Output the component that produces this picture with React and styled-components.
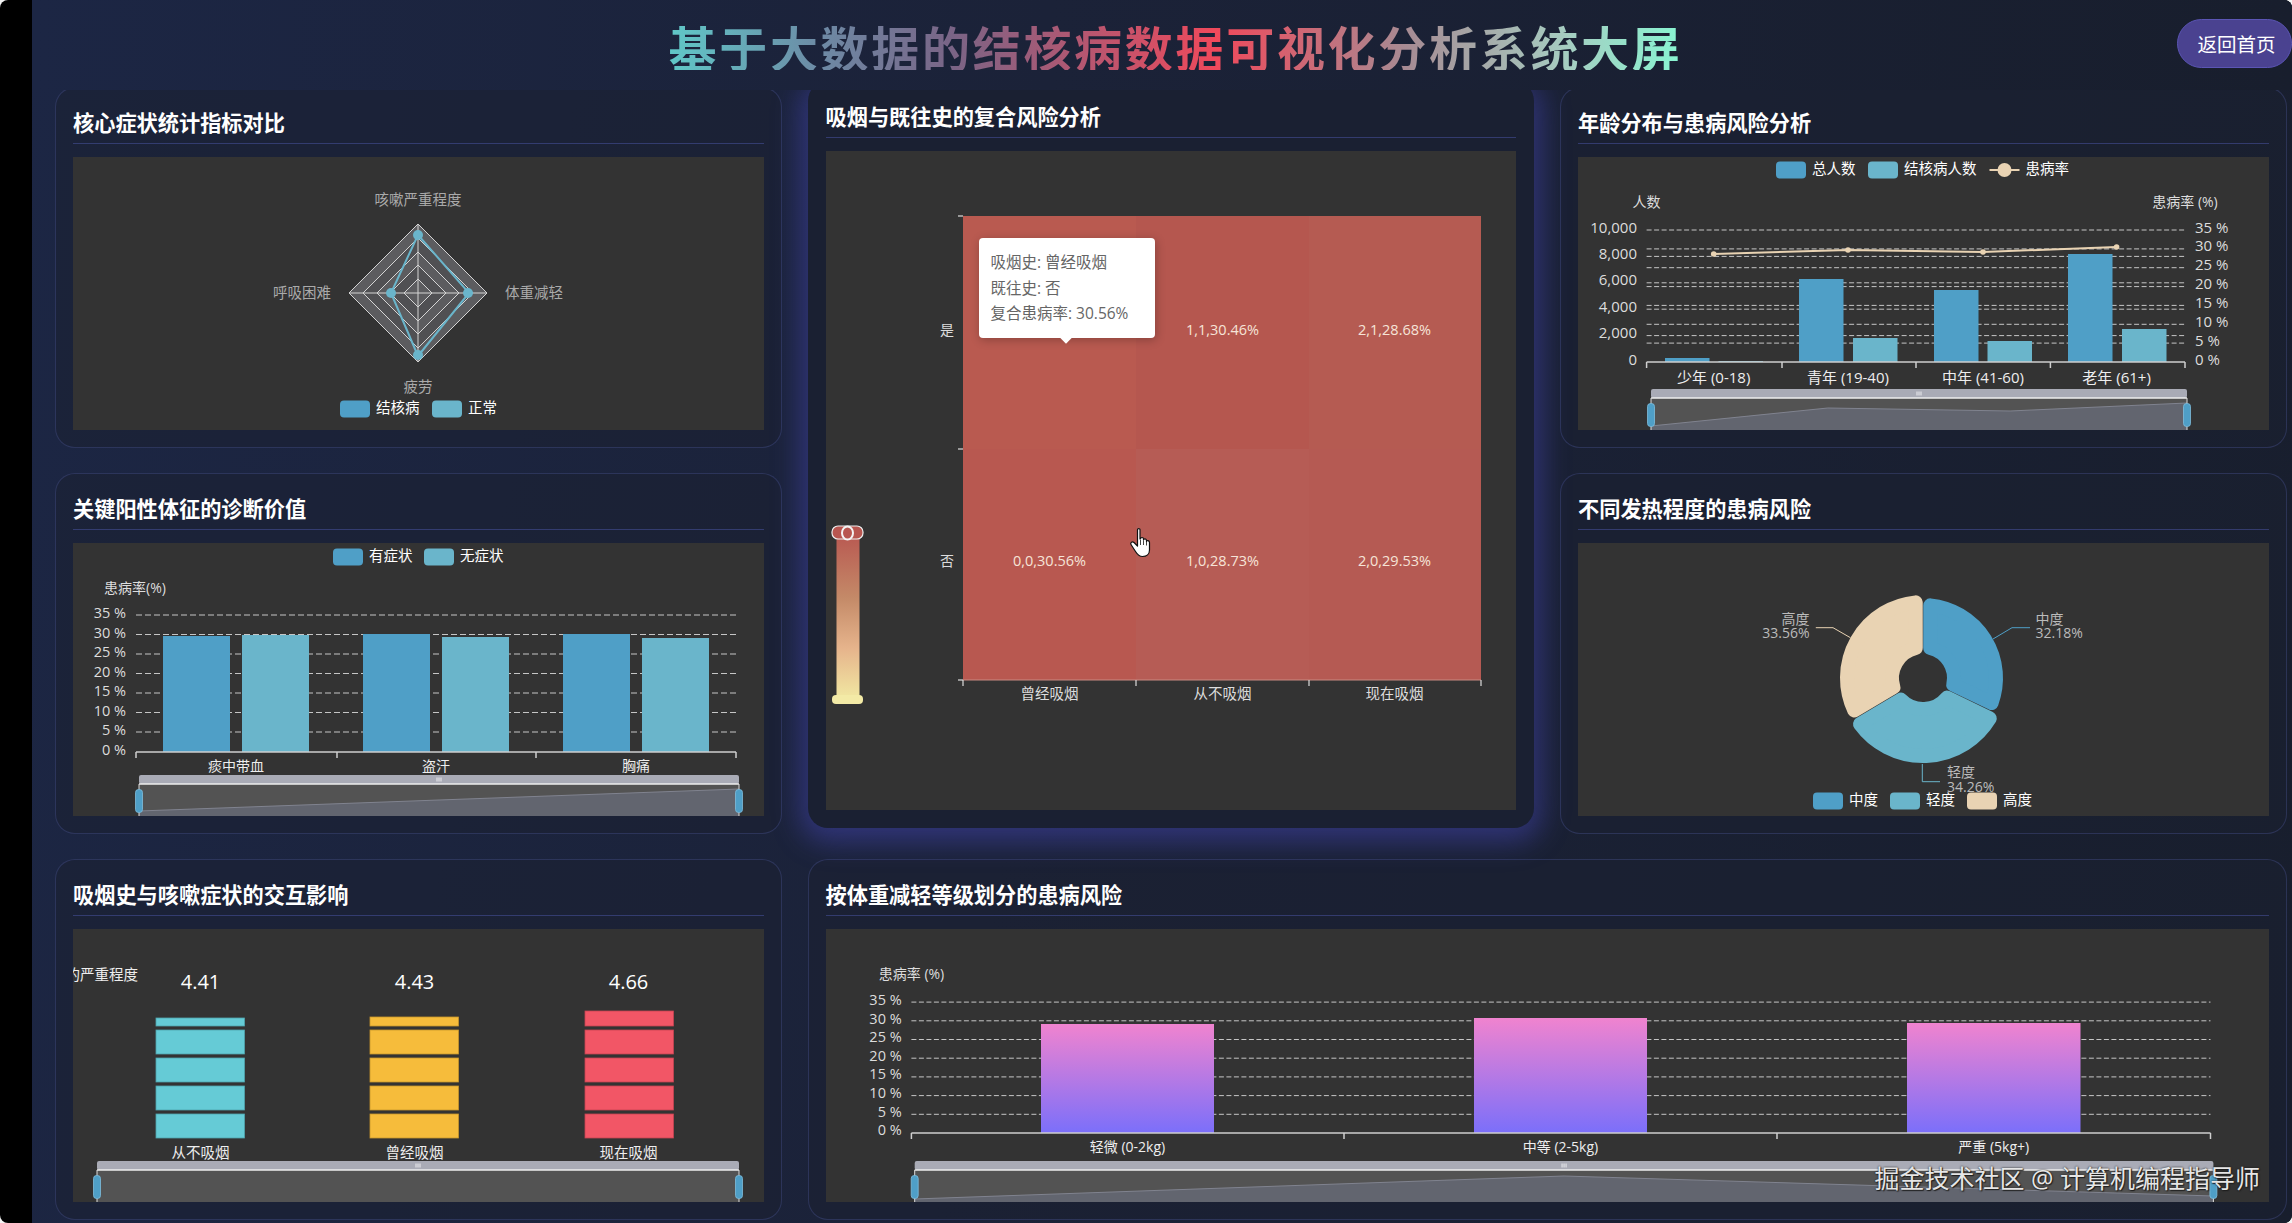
import React from "react";
import styled, { createGlobalStyle } from "styled-components";

const GlobalStyle = createGlobalStyle`
  html, body {
    margin: 0;
    height: 100%;
    background: #f4f4f4;
    overflow: hidden;
  }
  body {
    font-family: "Open Sans", "Noto Sans CJK SC", sans-serif;
  }
`;

const Frame = styled.div`
  position: relative;
  display: flex;
  width: 2292px;
  height: 1223px;
  background: #000;
  border-radius: 8px;
  overflow: hidden;
`;

const Main = styled.main`
  margin-left: 32px;
  flex: 1;
  min-width: 0;
  background: linear-gradient(100deg, #1c2644 0%, #1b2238 45%, #181e2d 100%);
`;

// sits over the top edge of the first row, as it does in the original page
const Header = styled.header`
  position: relative;
  z-index: 2;
  display: grid;
  grid-template-columns: 1fr auto 1fr;
  align-items: start;
  height: 90px;
  padding: 19px 0 0 27px;
  box-sizing: border-box;
  background: linear-gradient(90deg, #1c2644 0%, #1b2238 45%, #181e2d 100%);
`;

const Title = styled.h1`
  grid-column: 2;
  margin: 3px 0 0;
  font-size: 48px;
  line-height: 1;
  font-weight: 700;
  letter-spacing: 2.7px;
  white-space: nowrap;
  font-family: "Noto Sans CJK SC", sans-serif;
  background: linear-gradient(90deg, #60c8c8 0%, #6d8aa5 15%, #7a6486 28%, #f0495b 54%, #a68c94 73%, #a6cbc0 88%, #88f5d2 100%);
  -webkit-background-clip: text;
  background-clip: text;
  color: transparent;
`;

const BackButton = styled.button`
  grid-column: 3;
  justify-self: end;
  width: 115px;
  height: 49px;
  padding: 0 0 0 4px;
  border: 1px solid #5b55b4;
  border-radius: 25px;
  background: #4a4290;
  color: #fff;
  font-family: inherit;
  font-size: 19.5px;
`;

const Board = styled.div`
  display: grid;
  grid-template-columns: repeat(3, 726.5px);
  grid-template-rows: repeat(3, 361px);
  column-gap: 26px;
  row-gap: 25px;
  margin-top: -3px;
  padding-left: 23px;
`;

const Card = styled.section`
  display: flex;
  flex-direction: column;
  box-sizing: border-box;
  padding: 17px;
  min-width: 0;
  border: 1px solid rgba(74, 84, 150, 0.38);
  border-radius: 20px;
  background: rgba(27, 33, 50, 0.55);
  grid-column: ${(p) => p.$col || "auto"};
  grid-row: ${(p) => p.$row || "auto"};
  ${(p) =>
    p.$lifted &&
    `
    position: relative;
    z-index: 1;
    transform: translateY(-6px);
    border-color: transparent;
    background: #1a2032;
    box-shadow: 0 6px 28px 8px rgba(78, 78, 210, 0.42);
  `}
`;

const CardHead = styled.h2`
  display: flex;
  align-items: center;
  flex: none;
  box-sizing: border-box;
  height: 39px;
  margin: 0 0 13px;
  padding-bottom: 6px;
  border-bottom: 1px solid rgba(68, 78, 150, 0.6);
  color: #fff;
  font-family: "Noto Sans CJK SC", sans-serif;
  font-size: 21.2px;
  font-weight: 700;
`;

const ChartBox = styled.div`
  position: relative;
  flex: 1;
  min-height: 0;
  background: #333;
  overflow: hidden;
`;

const Plot = styled.svg`
  display: block;
  width: 100%;
  height: 100%;
`;

const Label = styled.text`
  font-size: ${(p) => p.$size || 14}px;
  fill: ${(p) => p.$color || "#ddd"};
  text-anchor: ${(p) => p.$anchor || "middle"};
  dominant-baseline: central;
  transform: translateY(-1.5px);
`;

const Tooltip = styled.div`
  position: absolute;
  left: 153px;
  top: 87px;
  width: 176px;
  height: 100px;
  box-sizing: border-box;
  padding: 12px 0 0 12px;
  border-radius: 4px;
  background: #fff;
  box-shadow: 1px 2px 10px rgba(0, 0, 0, 0.25);
  color: #666;
  font-size: 15.5px;
  line-height: 25.5px;
  white-space: nowrap;

  &::after {
    content: "";
    position: absolute;
    left: 83px;
    bottom: -4px;
    width: 8px;
    height: 8px;
    background: #fff;
    transform: rotate(45deg);
  }
`;

const Watermark = styled.div`
  position: absolute;
  z-index: 3;
  right: 32px;
  top: 1161px;
  color: #e6e6e6;
  font-size: 25px;
  line-height: 34px;
  white-space: nowrap;
  text-shadow: 0 0 2px #111, 1px 1px 1px #222;
`;

const BLUE = "#4f9fc7";
const TEAL = "#6ab5cb";
const SAND = "#e9d3b3";

const Legend = ({ y, items }) => (
  <g>
    {items.map((it) => (
      <g key={it.label}>
        {it.line ? (
          <>
            <line x1={it.x} x2={it.x + 30} y1={y} y2={y} stroke={it.color} strokeWidth="2" />
            <circle cx={it.x + 15} cy={y} r="7" fill={it.color} />
          </>
        ) : (
          <rect x={it.x} y={y - 8.5} width="30" height="17" rx="4" fill={it.color} />
        )}
        <Label x={it.x + 36} y={y} $anchor="start" $size={14.5} $color="#fff">
          {it.label}
        </Label>
      </g>
    ))}
  </g>
);

const Dashes = ({ x0, x1, ys, dash = "6 3" }) => (
  <g stroke="#c6c6c6" strokeWidth="1" strokeDasharray={dash}>
    {ys.map((y) => (
      <line key={y} x1={x0} x2={x1} y1={y} y2={y} />
    ))}
  </g>
);

const XAxis = ({ y, ticks, color = "#cfcfcf" }) => (
  <g stroke={color} strokeWidth="1.5" fill="none">
    <line x1={ticks[0]} x2={ticks[ticks.length - 1]} y1={y} y2={y} />
    {ticks.map((t) => (
      <line key={t} x1={t} x2={t} y1={y} y2={y + 6} />
    ))}
  </g>
);

// range slider under the bar charts
const DataZoom = ({ x0, x1, line, bottom = 274 }) => {
  const pts = line ? line.map(([f, y]) => `${x0 + f * (x1 - x0)},${y}`).join(" ") : "";
  const mid = (x0 + x1) / 2;
  return (
    <g>
      <rect x={x0} y="232" width={x1 - x0} height="9" rx="2" fill="#a9abb6" />
      {[-2, 0, 2].map((d) => (
        <line key={d} x1={mid + d} x2={mid + d} y1="234.5" y2="238.5" stroke="#fff" strokeWidth="0.8" />
      ))}
      <rect x={x0} y="241" width={x1 - x0} height={bottom - 241} fill="#535353" />
      {line && <polygon points={`${x0},${bottom} ${pts} ${x1},${bottom}`} fill="#62656f" />}
      {line && <polyline points={pts} fill="none" stroke="#80838f" strokeWidth="1" />}
      <line x1={x0} x2={x1} y1="241" y2="241" stroke="#eee" strokeWidth="1.5" />
      {[x0, x1].map((x) => (
        <g key={x}>
          <line x1={x} x2={x} y1="241" y2={bottom} stroke="#ddd" strokeWidth="1" />
          <rect x={x - 3.5} y="246.5" width="7" height="23" rx="3" fill={BLUE} stroke="#7fbedd" strokeWidth="0.8" />
        </g>
      ))}
    </g>
  );
};

const diamond = (t, r, b, l) => `345,${136 - t} ${345 + r},136 345,${136 + b} ${345 - l},136`;

const RadarChart = () => (
  <Plot>
    {[69, 55, 41, 28, 14].map((r, i) => (
      <polygon key={r} points={diamond(r, r, r, r)} fill={i % 2 ? "#505053" : "#5c5c5f"} stroke="#d4d4d4" strokeWidth="1" />
    ))}
    <line x1="345" x2="345" y1="67" y2="205" stroke="#d4d4d4" />
    <line x1="276" x2="414" y1="136" y2="136" stroke="#d4d4d4" />
    <polygon points={diamond(58, 51, 63, 27)} fill="none" stroke={TEAL} strokeWidth="2" />
    {[[345, 78], [395, 136], [345, 198], [318, 136]].map(([x, y]) => (
      <circle key={x + "-" + y} cx={x} cy={y} r="5" fill={TEAL} />
    ))}
    <Label x="345" y="43.5" $size={14.5} $color="#aaa">咳嗽严重程度</Label>
    <Label x="461" y="136.5" $size={14.5} $color="#aaa">体重减轻</Label>
    <Label x="345" y="230.5" $size={14.5} $color="#aaa">疲劳</Label>
    <Label x="229" y="136.5" $size={14.5} $color="#aaa">呼吸困难</Label>
    <Legend
      y={252}
      items={[
        { x: 267, label: "结核病", color: BLUE },
        { x: 359, label: "正常", color: TEAL },
      ]}
    />
  </Plot>
);

const signRows = [72, 91.5, 111, 130.5, 150, 169.5, 189];
const signBars = [
  { x: 90, top: 93, color: BLUE },
  { x: 169, top: 92, color: TEAL },
  { x: 290, top: 91, color: BLUE },
  { x: 369, top: 94, color: TEAL },
  { x: 490, top: 91, color: BLUE },
  { x: 569, top: 95, color: TEAL },
];

const SignChart = () => (
  <Plot>
    <Legend
      y={14}
      items={[
        { x: 260, label: "有症状", color: BLUE },
        { x: 351, label: "无症状", color: TEAL },
      ]}
    />
    <Label x="31" y="46" $anchor="start">患病率(%)</Label>
    <Dashes x0={63} x1={663} ys={signRows} />
    {["35 %", "30 %", "25 %", "20 %", "15 %", "10 %", "5 %", "0 %"].map((t, i) => (
      <Label key={t} x="53" y={71 + i * 19.5} $anchor="end" $size={14.5}>{t}</Label>
    ))}
    {signBars.map((b) => (
      <rect key={b.x} x={b.x} y={b.top} width="67" height={209 - b.top} fill={b.color} />
    ))}
    <XAxis y={209} ticks={[63, 264, 463, 663]} />
    <Label x="163" y="224" $color="#eee">痰中带血</Label>
    <Label x="363" y="224" $color="#eee">盗汗</Label>
    <Label x="563" y="224" $color="#eee">胸痛</Label>
    <DataZoom x0={66} x1={666} line={[[0, 268], [0.5, 257], [1, 246]]} />
  </Plot>
);

const CELLS = [
  { x: 137, y: 65, w: 173, h: 233, fill: "#b95a50" },
  { x: 310, y: 65, w: 173, h: 233, fill: "#b5574f", label: "1,1,30.46%", lx: 396.5, ly: 179.5 },
  { x: 483, y: 65, w: 172, h: 233, fill: "#b55b52", label: "2,1,28.68%", lx: 568.5, ly: 179.5 },
  { x: 137, y: 298, w: 173, h: 231, fill: "#b85850", label: "0,0,30.56%", lx: 223.5, ly: 410.5 },
  { x: 310, y: 298, w: 173, h: 231, fill: "#b65c55", label: "1,0,28.73%", lx: 396.5, ly: 410.5 },
  { x: 483, y: 298, w: 172, h: 231, fill: "#b55a53", label: "2,0,29.53%", lx: 568.5, ly: 410.5 },
];

const HeatChart = () => (
  <Plot>
    <defs>
      <linearGradient id="scale" x1="0" x2="0" y1="0" y2="1">
        <stop offset="0" stopColor="#b85650" />
        <stop offset="0.4" stopColor="#c48a68" />
        <stop offset="0.7" stopColor="#e6b48c" />
        <stop offset="1" stopColor="#f1e8a2" />
      </linearGradient>
    </defs>
    <rect x="10.5" y="380" width="23" height="168" fill="url(#scale)" />
    <rect x="6" y="375" width="31" height="13" rx="6" fill="#b85650" stroke="#eee" strokeWidth="1.2" />
    <ellipse cx="21.5" cy="382" rx="5.5" ry="6.5" fill="#b85650" stroke="#f4f4f4" strokeWidth="2" />
    <rect x="6" y="544" width="31" height="9" rx="4" fill="#f3eaa6" />

    {CELLS.map((c) => (
      <rect key={c.x + "-" + c.y} x={c.x} y={c.y} width={c.w} height={c.h} fill={c.fill} />
    ))}
    {CELLS.filter((c) => c.label).map((c) => (
      <Label key={c.label} x={c.lx} y={c.ly} $color="#f6e4d8" $size={14.5}>{c.label}</Label>
    ))}

    <g stroke="#ddd" strokeWidth="1.2">
      {[65, 298, 529].map((y) => (
        <line key={y} x1="132" x2="137" y1={y} y2={y} />
      ))}
      <line x1="137" x2="655" y1="529" y2="529" stroke="#c98a82" />
      {[137, 310, 483, 655].map((x) => (
        <line key={x} x1={x} x2={x} y1="529" y2="535" />
      ))}
    </g>
    <Label x="121" y="179.5">是</Label>
    <Label x="121" y="410.5">否</Label>
    <Label x="223.5" y="544" $size={14.5}>曾经吸烟</Label>
    <Label x="396.5" y="544" $size={14.5}>从不吸烟</Label>
    <Label x="568.5" y="544" $size={14.5}>现在吸烟</Label>

    {/* mouse pointer caught in the screenshot */}
    <g transform="translate(303.5 377)" fill="#fff" stroke="#111" strokeWidth="1.2" strokeLinejoin="round">
      <path d="M8 1.5C8 .3 10.5 .3 10.5 1.5V11H11C11 9 14 9 14 11V12C14 10.5 17 10.5 17 12.5V13.5C17 12 20 12.5 20 14.5V22C20 26 17 28.5 13 28.5C9 28.5 7.5 26 6 23.5L1.5 16.5C.5 15 2.5 13 4.5 14.5L8 18Z" />
      <path d="M11 12V17M14 12.5V17M17 13.5V17.5" fill="none" strokeWidth="0.8" />
    </g>
  </Plot>
);

const ageLeft = [73, 99.4, 125.8, 152.2, 178.6];
const ageRight = [91.9, 110.7, 129.6, 148.4, 167.3, 186.1];
const ageBars = [
  { x: 87, top: 201, color: BLUE },
  { x: 140.5, top: 204, color: TEAL },
  { x: 221, top: 122, color: BLUE },
  { x: 275, top: 181, color: TEAL },
  { x: 356, top: 133, color: BLUE },
  { x: 409.5, top: 184, color: TEAL },
  { x: 490, top: 97, color: BLUE },
  { x: 544, top: 172, color: TEAL },
];
const ageRate = [[135.7, 97], [270, 93], [405, 95], [538.6, 90]];

const AgeChart = () => (
  <Plot>
    <Legend
      y={13}
      items={[
        { x: 198, label: "总人数", color: BLUE },
        { x: 290, label: "结核病人数", color: TEAL },
        { x: 411.5, label: "患病率", color: SAND, line: true },
      ]}
    />
    <Label x="68.5" y="46">人数</Label>
    <Label x="607" y="46">患病率 (%)</Label>
    <Dashes x0={68.6} x1={607} ys={[...ageLeft, ...ageRight]} dash="5 2.5" />
    {["10,000", "8,000", "6,000", "4,000", "2,000", "0"].map((t, i) => (
      <Label key={t} x="59" y={71 + i * 26.4} $anchor="end" $size={15}>{t}</Label>
    ))}
    {["35 %", "30 %", "25 %", "20 %", "15 %", "10 %", "5 %", "0 %"].map((t, i) => (
      <Label key={t} x="617" y={71 + i * 18.9} $anchor="start" $size={15}>{t}</Label>
    ))}
    {ageBars.map((b) => (
      <rect key={b.x} x={b.x} y={b.top} width="44.5" height={205 - b.top} fill={b.color} />
    ))}
    <polyline points={ageRate.map((p) => p.join(",")).join(" ")} fill="none" stroke={SAND} strokeWidth="2" />
    {ageRate.map(([x, y]) => (
      <circle key={x} cx={x} cy={y} r="2.8" fill={SAND} />
    ))}
    <XAxis y={205} ticks={[68.6, 204, 338, 472.4, 607]} />
    <Label x="135.7" y="221" $color="#eee" $size={15}>少年 (0-18)</Label>
    <Label x="270" y="221" $color="#eee" $size={15}>青年 (19-40)</Label>
    <Label x="405" y="221" $color="#eee" $size={15}>中年 (41-60)</Label>
    <Label x="538.6" y="221" $color="#eee" $size={15}>老年 (61+)</Label>
    <DataZoom x0={73} x1={609} line={[[0, 269], [0.33, 251], [0.67, 254], [1, 246]]} />
  </Plot>
);

const polar = (r, a) => [345 + r * Math.sin(a), 135 - r * Math.cos(a)];

// rounded ring sector: the round stroke puts back what the inset takes off
const sector = (ri, ro, a0, a1, c) => {
  const oa = (c + 0.3) / (ro - c);
  const ia = (c + 0.3) / (ri + c);
  const [ax, ay] = polar(ro - c, a0 + oa);
  const [bx, by] = polar(ro - c, a1 - oa);
  const [cx, cy] = polar(ri + c, a1 - ia);
  const [dx, dy] = polar(ri + c, a0 + ia);
  return `M${ax} ${ay}A${ro - c} ${ro - c} 0 0 1 ${bx} ${by}L${cx} ${cy}A${ri + c} ${ri + c} 0 0 0 ${dx} ${dy}Z`;
};

const DEG = Math.PI / 180;
const PETALS = [
  { from: 0, to: 115.8, r: 80, color: BLUE },
  { from: 239.2, to: 360, r: 83, color: SAND },
  { from: 115.8, to: 239.2, r: 85, color: TEAL },
];

const PieChart = () => (
  <Plot>
    {PETALS.map((p) => (
      <path
        key={p.color}
        d={sector(24, p.r, p.from * DEG, p.to * DEG, 7)}
        fill={p.color}
        stroke={p.color}
        strokeWidth="14"
        strokeLinejoin="round"
      />
    ))}
    <polyline points="272.4,94.7 255,84.7 237.8,84.7" fill="none" stroke={SAND} />
    <polyline points="415,96 434,84.7 452,84.7" fill="none" stroke={BLUE} />
    <polyline points="344.3,221 344.3,238.7 362,238.7" fill="none" stroke={TEAL} />
    <Label x="231.6" y="77" $anchor="end" $color="#bbb">高度</Label>
    <Label x="231.6" y="91" $anchor="end" $color="#bbb">33.56%</Label>
    <Label x="457.5" y="77" $anchor="start" $color="#bbb">中度</Label>
    <Label x="457.5" y="91" $anchor="start" $color="#bbb">32.18%</Label>
    <Label x="369" y="230" $anchor="start" $color="#bbb">轻度</Label>
    <Label x="369" y="245" $anchor="start" $color="#bbb">34.26%</Label>
    <Legend
      y={258}
      items={[
        { x: 235, label: "中度", color: BLUE },
        { x: 312, label: "轻度", color: TEAL },
        { x: 389, label: "高度", color: SAND },
      ]}
    />
  </Plot>
);

const STACKS = [
  { x: 83, cx: 127.5, top: 89, color: "#65cbd6", edge: "#4fa3ad", value: "4.41", name: "从不吸烟" },
  { x: 297, cx: 341.5, top: 88, color: "#f6bc3b", edge: "#c8962c", value: "4.43", name: "曾经吸烟" },
  { x: 512, cx: 555.5, top: 82, color: "#f25666", edge: "#c54452", value: "4.66", name: "现在吸烟" },
];

const StackChart = () => (
  <Plot>
    <Label x="65" y="47" $anchor="end" $size={14.5} $color="#eee">咳嗽的严重程度</Label>
    {STACKS.map((s) => (
      <g key={s.name} fill={s.color} stroke={s.edge} strokeWidth="0.8">
        <rect x={s.x} y={s.top} width="88.5" height={97 - s.top} />
        {[101, 129, 157, 185].map((y) => (
          <rect key={y} x={s.x} y={y} width="88.5" height="24" />
        ))}
      </g>
    ))}
    {STACKS.map((s) => (
      <g key={s.value}>
        <Label x={s.cx} y="54" $size={20} $color="#fff">{s.value}</Label>
        <Label x={s.cx} y="225" $color="#eee" $size={14.5}>{s.name}</Label>
      </g>
    ))}
    <DataZoom x0={24} x1={666} />
  </Plot>
);

const weightRows = [73.1, 91.8, 110.5, 129.2, 147.9, 166.6, 185.3];
const weightBars = [
  { x: 215, w: 173, top: 95, name: "轻微 (0-2kg)" },
  { x: 648, w: 173, top: 89, name: "中等 (2-5kg)" },
  { x: 1081, w: 173.5, top: 94, name: "严重 (5kg+)" },
];

const WeightChart = () => (
  <Plot>
    <defs>
      <linearGradient id="violet" x1="0" x2="0" y1="0" y2="1">
        <stop offset="0" stopColor="#f083cf" />
        <stop offset="1" stopColor="#7b6ffa" />
      </linearGradient>
    </defs>
    <Label x="85.5" y="46">患病率 (%)</Label>
    <Dashes x0={85.4} x1={1384.5} ys={weightRows} dash="5 2.5" />
    {["35 %", "30 %", "25 %", "20 %", "15 %", "10 %", "5 %", "0 %"].map((t, i) => (
      <Label key={t} x="75.7" y={72 + i * 18.6} $anchor="end" $size={14.5}>{t}</Label>
    ))}
    {weightBars.map((b) => (
      <g key={b.name}>
        <rect x={b.x} y={b.top} width={b.w} height={204 - b.top} fill="url(#violet)" />
        <Label x={b.x + b.w / 2} y="219" $color="#eee">{b.name}</Label>
      </g>
    ))}
    <XAxis y={204} ticks={[85.4, 518, 951, 1384.5]} />
    <DataZoom x0={88.7} x1={1387.4} line={[[0, 270], [0.5, 247], [1, 267]]} />
  </Plot>
);

export default function App() {
  return (
    <>
      <GlobalStyle />
      <Frame>
        <Main>
          <Header>
            <Title>基于大数据的结核病数据可视化分析系统大屏</Title>
            <BackButton>返回首页</BackButton>
          </Header>
          <Board>
            <Card>
              <CardHead>核心症状统计指标对比</CardHead>
              <ChartBox><RadarChart /></ChartBox>
            </Card>
            <Card $lifted $col="2" $row="1 / span 2">
              <CardHead>吸烟与既往史的复合风险分析</CardHead>
              <ChartBox>
                <HeatChart />
                <Tooltip>
                  吸烟史: 曾经吸烟<br />
                  既往史: 否<br />
                  复合患病率: 30.56%
                </Tooltip>
              </ChartBox>
            </Card>
            <Card $col="3" $row="1">
              <CardHead>年龄分布与患病风险分析</CardHead>
              <ChartBox><AgeChart /></ChartBox>
            </Card>
            <Card $col="1" $row="2">
              <CardHead>关键阳性体征的诊断价值</CardHead>
              <ChartBox><SignChart /></ChartBox>
            </Card>
            <Card $col="3" $row="2">
              <CardHead>不同发热程度的患病风险</CardHead>
              <ChartBox><PieChart /></ChartBox>
            </Card>
            <Card $col="1" $row="3">
              <CardHead>吸烟史与咳嗽症状的交互影响</CardHead>
              <ChartBox><StackChart /></ChartBox>
            </Card>
            <Card $col="2 / span 2" $row="3">
              <CardHead>按体重减轻等级划分的患病风险</CardHead>
              <ChartBox><WeightChart /></ChartBox>
            </Card>
          </Board>
        </Main>
        <Watermark>掘金技术社区 @ 计算机编程指导师</Watermark>
      </Frame>
    </>
  );
}
